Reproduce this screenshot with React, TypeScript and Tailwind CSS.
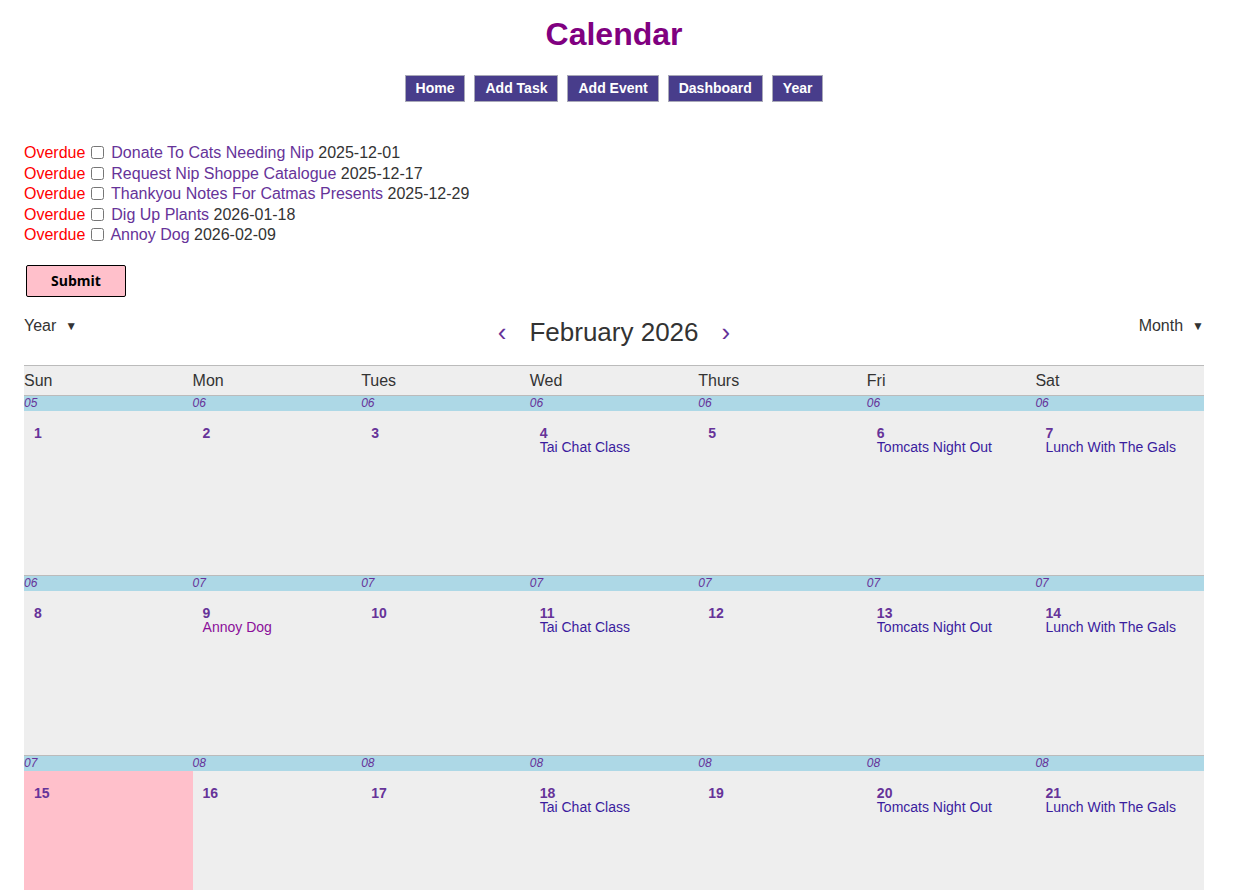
import React from 'react';

const navItems = ['Home', 'Add Task', 'Add Event', 'Dashboard', 'Year'];

const overdue = [
  { name: 'Donate To Cats Needing Nip', date: '2025-12-01' },
  { name: 'Request Nip Shoppe Catalogue', date: '2025-12-17' },
  { name: 'Thankyou Notes For Catmas Presents', date: '2025-12-29' },
  { name: 'Dig Up Plants', date: '2026-01-18' },
  { name: 'Annoy Dog', date: '2026-02-09' },
];

const dayNames = ['Sun', 'Mon', 'Tues', 'Wed', 'Thurs', 'Fri', 'Sat'];

type Item = { label: string; kind: 'event' | 'task' };

function itemsFor(day: number): Item[] {
  const dow = (day - 1) % 7;
  const list: Item[] = [];
  if (day === 9) list.push({ label: 'Annoy Dog', kind: 'task' });
  if (dow === 3) list.push({ label: 'Tai Chat Class', kind: 'event' });
  if (dow === 5) list.push({ label: 'Tomcats Night Out', kind: 'event' });
  if (dow === 6) list.push({ label: 'Lunch With The Gals', kind: 'event' });
  return list;
}

// ISO week for Feb 2026 (Feb 1 is a Sunday)
function weekLabel(day: number): string {
  const dow = (day - 1) % 7;
  const week = Math.floor((day - 1) / 7);
  const iso = dow === 0 ? 5 + week : 6 + week;
  return iso.toString().padStart(2, '0');
}

function DayCell({ day }: { day: number }) {
  const items = itemsFor(day);
  const today = day === 15;
  return (
    <div className="flex flex-col">
      <div className="h-[15px] bg-[#add8e6] text-[12px] leading-[15px] italic text-[#663399]">
        {weekLabel(day)}
      </div>
      <div className={`h-[164px] pl-[10px] pt-[15px] ${today ? 'bg-[#ffc0cb]' : 'bg-[#eeeeee]'}`}>
        <div className="text-[14px] leading-[14px] font-bold text-[#663399]">{day}</div>
        {items.map((it) => (
          <div
            key={it.label}
            className={`text-[14px] leading-[14px] ${it.kind === 'task' ? 'text-[#8b0e9a]' : 'text-[#3a1c9e]'}`}
          >
            {it.label}
          </div>
        ))}
      </div>
    </div>
  );
}

export default function App() {
  const weeks = [0, 1, 2, 3];
  return (
    <div className="bg-white min-h-screen font-['Liberation_Sans',Arial,sans-serif] text-[#333]">
      <div className="ml-[24px] w-[1180px]">
        {/* Title */}
        <h1 className="pt-[16px] text-center text-[32px] leading-[36px] font-bold text-[#800080]">Calendar</h1>

        {/* Nav */}
        <div className="mt-[23px] flex justify-center gap-[9px]">
          {navItems.map((n) => (
            <button
              key={n}
              className="h-[27px] px-[10px] border border-[#a9a9b8] bg-[#483d8b] text-[14px] font-bold text-white leading-[25px]"
            >
              {n}
            </button>
          ))}
        </div>

        {/* Overdue list */}
        <div className="mt-[41px] text-[16px] leading-[20.5px]">
          {overdue.map((t) => (
            <div key={t.name}>
              <span className="text-[#ff0000]">Overdue</span>{' '}
              <input type="checkbox" className="ml-[1px] mr-[3px] align-[-1px] w-[13px] h-[13px]" />{' '}
              <span className="text-[#663399]">{t.name}</span> <span className="text-[#333]">{t.date}</span>
            </div>
          ))}
        </div>

        <button className="mt-[19px] ml-[2px] w-[100px] h-[32px] bg-[#ffc0cb] border border-black rounded-[2px] font-['Open_Sans',sans-serif] font-bold text-[14px] text-black">
          Submit
        </button>

        {/* Controls */}
        <div className="mt-[20px] h-[48px] grid grid-cols-[1fr_auto_1fr] items-start">
          <div className="text-[16px] leading-[18px] text-[#333] flex items-center">
            Year<span className="ml-[9px] text-[12px]">▼</span>
          </div>
          <div className="flex items-start">
            <span className="text-[26px] leading-[30px] text-[#663399]">‹</span>
            <span className="mx-[23px] text-[26px] leading-[30px] text-[#333]">February 2026</span>
            <span className="text-[26px] leading-[30px] text-[#663399]">›</span>
          </div>
          <div className="justify-self-end text-[16px] leading-[18px] text-[#333] flex items-center">
            Month<span className="ml-[9px] text-[12px]">▼</span>
          </div>
        </div>

        {/* Calendar */}
        <div className="border-t border-[#bbbbbb]">
          <div className="grid grid-cols-7 h-[29px] bg-[#eeeeee] text-[16px] leading-[29px] text-[#333]">
            {dayNames.map((d) => (
              <div key={d}>{d}</div>
            ))}
          </div>
          {weeks.map((w) => (
            <div key={w} className="grid grid-cols-7 border-t border-[#bbbbbb]">
              {[1, 2, 3, 4, 5, 6, 7].map((i) => (
                <DayCell key={i} day={w * 7 + i} />
              ))}
            </div>
          ))}
        </div>
      </div>
    </div>
  );
}
